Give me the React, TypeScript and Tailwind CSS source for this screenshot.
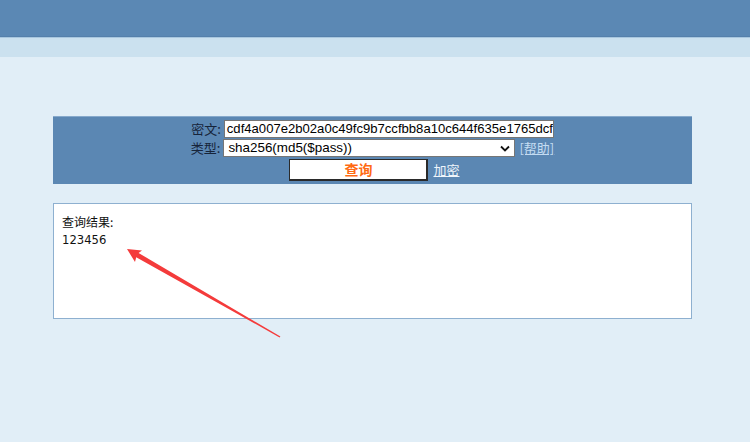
import React from "react";

export default function App() {
  return (
    <div className="relative w-[750px] h-[442px] bg-[#e1eef7] overflow-hidden" style={{ fontFamily: '"Liberation Sans", "Noto Sans CJK SC", sans-serif' }}>
      <div className="h-[36px] bg-[#5b88b4]" />
      <div className="h-[1px] bg-[#5580ab]" />
      <div className="h-[1px] bg-[#a9c7df]" />
      <div className="h-[19px] bg-[#cbe1ef]" />

      <div className="mt-[59px] ml-[53px] w-[639px] h-[68px] bg-[#5b87b3] border-t border-[#86a9cc] flex flex-col items-center pt-[3px]">
        <div className="flex items-center h-[18px]">
          <span className="text-[13px] text-[#16243a] mr-[3px]" style={{ fontFamily: '"Noto Sans CJK SC", sans-serif' }}>密文:</span>
          <div className="w-[330px] h-[18px] bg-white border border-[#767676] overflow-hidden whitespace-nowrap text-[13.1px] leading-[16px] text-black pl-[2px]">
            cdf4a007e2b02a0c49fc9b7ccfbb8a10c644f635e1765dcf
          </div>
        </div>
        <div className="flex items-center h-[18px] mt-[1px]">
          <span className="text-[13px] text-[#16243a] mr-[3px]" style={{ fontFamily: '"Noto Sans CJK SC", sans-serif' }}>类型:</span>
          <div className="w-[292px] h-[18px] bg-white border border-[#767676] flex items-center justify-between text-[13.4px] text-black pl-[4px] pr-[4px]">
            <span>sha256(md5($pass))</span>
            <svg width="10" height="7" viewBox="0 0 10 7"><path d="M1 1.5 L5 5.5 L9 1.5" fill="none" stroke="#111" strokeWidth="1.8" /></svg>
          </div>
          <span className="ml-[4px] text-[13px] text-[#c4dcf2] underline" style={{ fontFamily: '"Noto Sans CJK SC", sans-serif' }}>[帮助]</span>
        </div>
        <div className="flex items-center mt-[2px] pl-[4px]">
          <div className="w-[139px] h-[22px] bg-white border border-[#2a2a2a] border-r-2 border-b-2 flex items-center justify-center text-[14px] font-bold text-[#ff6a12]" style={{ fontFamily: '"Noto Sans CJK SC", sans-serif' }}>
            查询
          </div>
          <span className="ml-[5px] text-[13px] text-[#eef5fb] underline" style={{ fontFamily: '"Noto Sans CJK SC", sans-serif' }}>加密</span>
        </div>
      </div>

      <div className="mt-[19px] ml-[53px] w-[639px] h-[116px] bg-white border border-[#8eb0d0] pl-[8px] pt-[9px]">
        <div className="text-[12px] text-[#111] leading-[18px]" style={{ fontFamily: '"Noto Sans CJK SC", sans-serif' }}>查询结果:</div>
        <div className="text-[11.6px] text-[#111] leading-[18px]" style={{ fontFamily: '"DejaVu Sans", sans-serif' }}>123456</div>
      </div>

      <svg className="absolute left-0 top-0 pointer-events-none" width="750" height="442">
        <path d="M127 249 L142 250.5 L138.6 253 L280.4 336.6 L279.6 337.4 L136.2 257.2 L135 262 Z" fill="#f43b3b" />
      </svg>
    </div>
  );
}
